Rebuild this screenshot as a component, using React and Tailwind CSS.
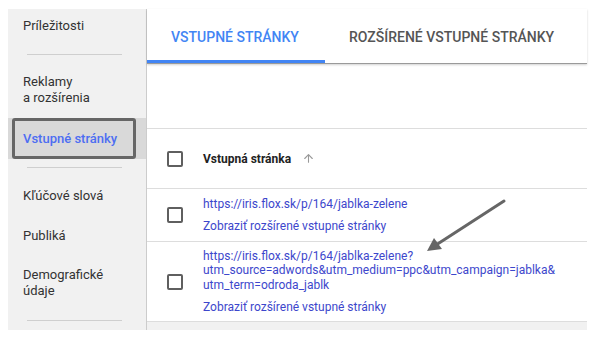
import React from "react";
import { ArrowUp } from "lucide-react";

const font = { fontFamily: "Roboto, 'Liberation Sans', sans-serif" };

function Checkbox() {
  return <div className="h-[16px] w-[16px] shrink-0 rounded-[2px] border-2 border-[#5f5f5f]" />;
}

function Divider() {
  return <div className="ml-[19px] h-px w-[95px] bg-[#cfcfcf]" />;
}

export default function App() {
  return (
    <div className="flex h-[340px] w-[597px] bg-white pl-[8px] pt-[9px]" style={font}>
      {/* sidebar */}
      <aside className="flex h-[321px] w-[139px] shrink-0 flex-col border-r border-[#cccccc] bg-[#f1f1f1] text-[13px] leading-[16px] text-[#333]">
        <div className="pl-[15px] pt-[9px]">Príležitosti</div>
        <div className="mt-[20px]"><Divider /></div>
        <div className="mt-[19px] pl-[15px]">
          Reklamy
          <br />a rozšírenia
        </div>
        <div className="mt-[12px] h-[41px] bg-[#d9d9d9]">
          <div className="ml-[4px] flex h-[41px] w-[124px] items-center rounded-[3px] border-[3px] border-[#666] pl-[8px] font-medium text-[#4d6ef2]">
            Vstupné stránky
          </div>
        </div>
        <div className="mt-[8px]"><Divider /></div>
        <div className="mt-[20px] pl-[15px]">Kľúčové slová</div>
        <div className="mt-[24px] pl-[15px]">Publiká</div>
        <div className="mt-[23px] pl-[15px]">
          Demografické
          <br />údaje
        </div>
        <div className="mt-[21px]"><Divider /></div>
      </aside>

      {/* main */}
      <main className="relative flex h-[321px] w-[440px] shrink-0 flex-col">
        <div className="flex h-[55px] shrink-0 border-b border-[#9a9a9a] text-[14px] font-medium shadow-[0_1px_2px_rgba(0,0,0,0.18)]">
          <div className="flex w-[178px] flex-col">
            <div className="flex flex-1 items-center pl-[24px] pt-[6px] text-[#4285f4]">VSTUPNÉ STRÁNKY</div>
            <div className="h-[3px] bg-[#4285f4]" />
          </div>
          <div className="flex items-center px-[24px] pt-[3px] text-[#555]">ROZŠÍRENÉ VSTUPNÉ STRÁNKY</div>
        </div>

        <div className="h-[64px] shrink-0" />

        <div className="flex h-[60px] shrink-0 items-center gap-[20px] border-t border-[#dddddd] pl-[20px] text-[12px]">
          <Checkbox />
          <span className="font-bold text-[#222]">Vstupná stránka</span>
          <ArrowUp size={13} strokeWidth={2} className="-ml-[9px] text-[#999]" />
        </div>

        <div className="flex h-[53px] shrink-0 items-center gap-[20px] border-t border-[#dddddd] pl-[20px] text-[12px] leading-[14.5px] text-[#3d47cc]">
          <Checkbox />
          <div>
            <div>https://iris.flox.sk/p/164/jablka-zelene</div>
            <div className="mt-[8px]">Zobraziť rozšírené vstupné stránky</div>
          </div>
        </div>

        <div className="flex h-[80px] shrink-0 items-center gap-[20px] border-t border-[#dddddd] pl-[20px] text-[12px] leading-[14.5px] text-[#3d47cc]">
          <Checkbox />
          <div>
            <div>
              https://iris.flox.sk/p/164/jablka-zelene?
              <br />
              utm_source=adwords&amp;utm_medium=ppc&amp;utm_campaign=jablka&amp;
              <br />
              utm_term=odroda_jablk
            </div>
            <div className="mt-[8px]">Zobraziť rozšírené vstupné stránky</div>
          </div>
        </div>

        <div className="flex-1 border-t border-[#dddddd] bg-[#f1f1f1]" />

        <svg className="absolute left-[275px] top-[187px]" width="90" height="70" viewBox="0 0 90 70">
          <line x1="82" y1="5" x2="14" y2="49" stroke="#666" strokeWidth="3" strokeLinecap="round" />
          <polygon points="5,55 12,42 20,53" fill="#666" />
        </svg>
      </main>
    </div>
  );
}
